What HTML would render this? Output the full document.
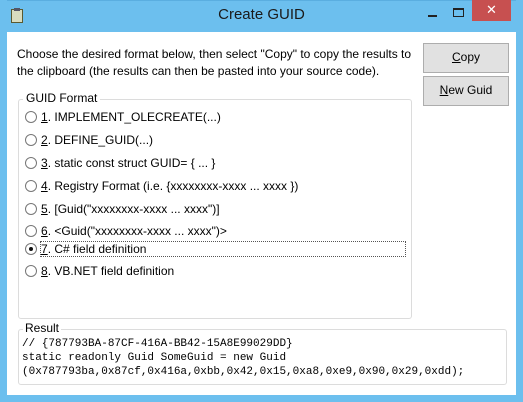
<!DOCTYPE html>
<html><head><style>
body{margin:0;width:523px;height:402px;background:#6cbfee;position:relative;overflow:hidden;font-family:"Liberation Sans",sans-serif;font-size:12px;color:#000}
.a{position:absolute}
.title{left:0;width:523px;top:6px;text-align:center;font-size:15px;color:#1a1a1a}
.client{left:7px;top:32px;width:509px;height:363px;background:#fff}
.btn{background:#e1e1e1;border:1px solid #adadad;text-align:center;line-height:27px;font-size:12px}
.gb{border:1px solid #dcdcdc;border-radius:3px}
.lbl{background:#fff;padding:0 3px;font-size:12px}
.r{left:25px;width:12px;height:12px;border:1px solid #777;border-radius:50%;background:#fff;box-sizing:border-box}
.rt{left:41px;font-size:12px;white-space:nowrap}
.mono{font-family:"Liberation Mono",monospace;font-size:11px;line-height:14px;white-space:pre}
</style></head><body>
<div class="a" style="left:7px;top:0;width:509px;height:1px;background:#5aaee0"></div>
<div class="a" style="left:11px;top:9px;width:12px;height:14px;background:#d8dcc0;border:1px solid #5a5a30;box-sizing:border-box"></div>
<div class="a" style="left:14px;top:8px;width:6px;height:3px;background:#556"></div>
<div class="a title">Create GUID</div>
<div class="a" style="left:428px;top:15px;width:9px;height:2px;background:#222"></div>
<div class="a" style="left:453px;top:8px;width:11px;height:9px;border:1px solid #222;border-top-width:2px;box-sizing:border-box"></div>
<div class="a" style="left:472px;top:0;width:39px;height:21px;background:#c75050;color:#fff;text-align:center;font-size:13px;line-height:20px">✕</div>
<div class="a client"></div>
<div class="a" style="left:17px;top:46px;line-height:17px;width:400px">Choose the desired format below, then select "Copy" to copy the results to<br>the clipboard (the results can then be pasted into your source code).</div>
<div class="a btn" style="left:423px;top:43px;width:84px;height:28px"><u>C</u>opy</div>
<div class="a btn" style="left:423px;top:76px;width:84px;height:28px"><u>N</u>ew Guid</div>
<div class="a gb" style="left:18px;top:99px;width:392px;height:218px"></div>
<div class="a lbl" style="left:23px;top:91px">GUID Format</div>
<div class="a r" style="top:111px"></div><div class="a rt" style="top:110px"><u>1</u>. IMPLEMENT_OLECREATE(...)</div>
<div class="a r" style="top:134px"></div><div class="a rt" style="top:133px"><u>2</u>. DEFINE_GUID(...)</div>
<div class="a r" style="top:157px"></div><div class="a rt" style="top:156px"><u>3</u>. static const struct GUID= { ... }</div>
<div class="a r" style="top:180px"></div><div class="a rt" style="top:179px"><u>4</u>. Registry Format (i.e. {xxxxxxxx-xxxx ... xxxx })</div>
<div class="a r" style="top:203px"></div><div class="a rt" style="top:202px"><u>5</u>. [Guid("xxxxxxxx-xxxx ... xxxx")]</div>
<div class="a r" style="top:225px"></div><div class="a rt" style="top:224px"><u>6</u>. &lt;Guid("xxxxxxxx-xxxx ... xxxx")&gt;</div>
<div class="a r" style="top:243px"></div><div class="a" style="left:29px;top:247px;width:4px;height:4px;border-radius:50%;background:#111"></div>
<div class="a" style="left:40px;top:241px;width:364px;height:14px;border:1px dotted #555"></div>
<div class="a rt" style="top:242px"><u>7</u>. C# field definition</div>
<div class="a r" style="top:265px"></div><div class="a rt" style="top:264px"><u>8</u>. VB.NET field definition</div>
<div class="a gb" style="left:18px;top:329px;width:487px;height:54px"></div>
<div class="a lbl" style="left:23px;top:321px;padding:0 2px">Result</div>
<div class="a mono" style="left:22px;top:337px">// {787793BA-87CF-416A-BB42-15A8E99029DD}
static readonly Guid SomeGuid = new Guid
(0x787793ba,0x87cf,0x416a,0xbb,0x42,0x15,0xa8,0xe9,0x90,0x29,0xdd);</div>
</body></html>
